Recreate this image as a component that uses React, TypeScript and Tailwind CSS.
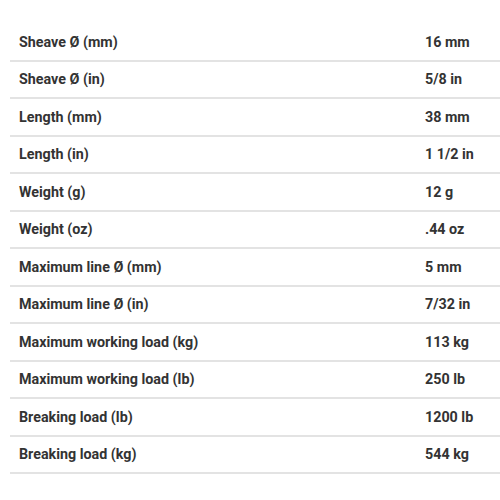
const rows: [string, string][] = [
  ["Sheave Ø (mm)", "16 mm"],
  ["Sheave Ø (in)", "5/8 in"],
  ["Length (mm)", "38 mm"],
  ["Length (in)", "1 1/2 in"],
  ["Weight (g)", "12 g"],
  ["Weight (oz)", ".44 oz"],
  ["Maximum line Ø (mm)", "5 mm"],
  ["Maximum line Ø (in)", "7/32 in"],
  ["Maximum working load (kg)", "113 kg"],
  ["Maximum working load (lb)", "250 lb"],
  ["Breaking load (lb)", "1200 lb"],
  ["Breaking load (kg)", "544 kg"],
];

export default function App() {
  return (
    <div className="w-[500px] h-[500px] bg-white pt-[24px] pl-[10px] font-['Roboto',sans-serif] text-[14.3px] font-bold text-[#333]">
      {rows.map(([label, value]) => (
        <div key={label} className="flex items-center h-[37.5px] pt-[1px] border-b-2 border-[#e3e3e3]">
          <div className="w-[415px] pl-[9px]">{label}</div>
          <div>{value}</div>
        </div>
      ))}
    </div>
  );
}
